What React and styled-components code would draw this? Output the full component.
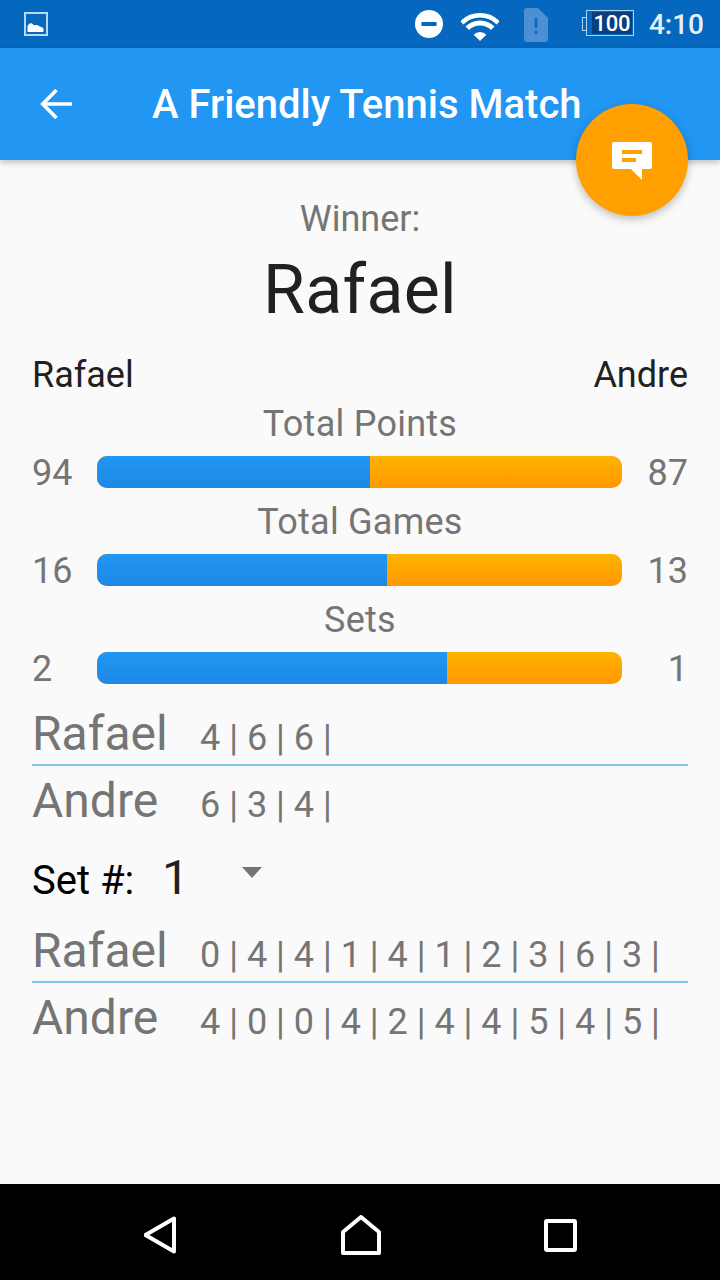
import React from 'react';
import styled, { createGlobalStyle } from 'styled-components';

const Global = createGlobalStyle`
  html, body { margin: 0; padding: 0; background: #fafafa; }
  body { font-family: Roboto, "Liberation Sans", sans-serif; }
  svg { display: block; }
`;

const Page = styled.div`
  position: relative;
  width: 720px;
  height: 1280px;
  display: flex;
  flex-direction: column;
  overflow: hidden;
  background: #fafafa;
`;

const StatusBar = styled.div`
  height: 48px;
  flex: none;
  background: #0568be;
  display: flex;
  align-items: center;
  padding: 0 16px 0 24px;
  color: #fff;
`;
const StatusRight = styled.div`
  margin-left: auto;
  display: flex;
  align-items: center;
`;
const StatusIcon = styled.span`
  display: block;
  margin-left: ${p => p.$left || 0}px;
  margin-top: ${p => p.$down || 0}px;
`;
const Clock = styled.span`
  font-size: 28px;
  font-weight: 500;
  margin-left: 15px;
  color: #e6f0f9;
`;
const Battery = styled.div`
  position: relative;
  width: 48px;
  height: 26px;
  margin: 0 0 2px 38px;
  box-sizing: border-box;
  border: 1px solid #a8d4f4;
  padding: 1px 1px 1px 5px;
  display: flex;
  &::before {
    content: '';
    position: absolute;
    left: -5px;
    top: 6px;
    width: 4px;
    height: 12px;
    border: 1px solid #a8d4f4;
    border-right: none;
  }
`;
const BatteryFill = styled.div`
  flex: 1;
  background: #0a3f7c;
  display: flex;
  align-items: center;
  justify-content: center;
  font-size: 22px;
  font-weight: 500;
  letter-spacing: -0.3px;
`;

const Toolbar = styled.div`
  position: relative;
  z-index: 1;
  height: 112px;
  flex: none;
  background: #2196f3;
  box-shadow: 0 3px 6px rgba(0, 0, 0, 0.22);
  display: flex;
  align-items: center;
  padding-left: 40px;
  box-sizing: border-box;
  color: #fff;
`;
const Title = styled.div`
  font-size: 40px;
  font-weight: 500;
  margin-left: 80px;
  white-space: nowrap;
`;
const Fab = styled.div`
  position: absolute;
  left: 576px;
  top: 56px;
  width: 112px;
  height: 112px;
  padding-top: 2px;
  box-sizing: border-box;
  border-radius: 50%;
  background: #ffa000;
  box-shadow: 0 3px 8px rgba(0, 0, 0, 0.25);
  display: flex;
  align-items: center;
  justify-content: center;
`;

const Content = styled.main`
  flex: 1;
  padding: 0 32px;
  display: flex;
  flex-direction: column;
`;
const WinnerLabel = styled.div`
  margin-top: 38px;
  text-align: center;
  font-size: 36px;
  line-height: 42px;
  color: #757575;
`;
const WinnerName = styled.div`
  text-align: center;
  font-size: 68px;
  line-height: 80px;
  letter-spacing: 0.3px;
  margin-top: 10px;
  color: #212121;
`;
const Players = styled.div`
  display: flex;
  justify-content: space-between;
  font-size: 36px;
  line-height: 42px;
  margin-top: 24px;
  color: #212121;
`;
const StatLabel = styled.div`
  text-align: center;
  font-size: 36px;
  line-height: 42px;
  letter-spacing: 0.25px;
  margin-top: ${p => p.$top}px;
  color: #757575;
`;
const StatRow = styled.div`
  display: flex;
  align-items: center;
  height: 42px;
  margin-top: 6px;
  font-size: 36px;
  color: #757575;
`;
const StatLeft = styled.span`
  width: 65px;
  padding-top: 2px;
`;
const StatRight = styled.span`
  width: 66px;
  padding-top: 2px;
  text-align: right;
`;
const Bar = styled.div`
  width: 525px;
  height: 32px;
  border-radius: 10px;
  overflow: hidden;
  background: linear-gradient(#ffb300, #ff9800);
`;
const BarFill = styled.div`
  height: 100%;
  background: linear-gradient(#2196f3, #1e88e5);
`;
const ScoreRow = styled.div`
  display: flex;
  align-items: baseline;
  height: ${p => p.$h}px;
  box-sizing: border-box;
  padding-top: ${p => p.$pad || 0}px;
  border-bottom: ${p => (p.$line ? '2px solid #81c6f3' : 'none')};
  white-space: nowrap;
  color: #757575;
  margin-top: ${p => p.$top || 0}px;
`;
const ScoreName = styled.span`
  width: 168px;
  font-size: 48px;
  line-height: 56px;
`;
const ScoreValues = styled.span`
  font-size: 36px;
  line-height: 56px;
`;
const SetRow = styled.div`
  display: flex;
  align-items: baseline;
  margin-top: 15px;
  height: 74px;
`;
const SetLabel = styled.span`
  font-size: 40px;
  color: #000;
  width: 130px;
`;
const SetValue = styled.span`
  font-size: 48px;
  color: #212121;
  width: 80px;
`;
const Caret = styled.span`
  width: 0;
  height: 0;
  border-left: 10px solid transparent;
  border-right: 10px solid transparent;
  border-top: 11px solid #757575;
  align-self: flex-start;
  margin-top: 18px;
`;

const NavBar = styled.nav`
  height: 96px;
  flex: none;
  box-sizing: border-box;
  padding-top: 6px;
  background: #000;
  display: flex;
  align-items: center;
  justify-content: center;
  gap: 163px;
`;

const Gallery = () => (
  <svg width="24" height="24" viewBox="0 0 24 24">
    <rect x="1" y="1" width="22" height="22" fill="none" stroke="#b8d8f2" strokeWidth="2" />
    <path d="M3.500 20v-6c1-2 3-3.500 4.500-2.500 1 .8 2 2 3 1.800 1.500-.5 3-.5 4 .7.800 1 2 .8 3 1.200.800.400 1.500 1 1.500 2V20z" fill="#fff" />
  </svg>
);
const Dnd = () => (
  <svg width="28" height="28" viewBox="0 0 28 28">
    <circle cx="14" cy="14" r="14" fill="#fff" />
    <rect x="6.500" y="12" width="15" height="4" fill="#0568be" />
  </svg>
);
const Wifi = () => (
  <svg width="38" height="28" viewBox="0 0 38 28">
    <path d="M0.800 9.800A25.750 25.750 0 0 1 37.200 9.800" fill="none" stroke="#fff" strokeWidth="4.500" />
    <path d="M6.270 15.270A18 18 0 0 1 31.730 15.270" fill="none" stroke="#fff" strokeWidth="5" />
    <path d="M19 28L12.640 21.640A9 9 0 0 1 25.360 21.640z" fill="#fff" />
  </svg>
);
const Sim = () => (
  <svg width="24" height="34" viewBox="0 0 24 34">
    <path d="M3 0h11l10 10v21a3 3 0 0 1-3 3H3a3 3 0 0 1-3-3V3a3 3 0 0 1 3-3z" fill="#4c8fd2" />
    <rect x="10.500" y="10" width="3" height="10" fill="#0f6cc0" />
    <rect x="10.500" y="23" width="3" height="3" fill="#0f6cc0" />
  </svg>
);
const BackArrow = () => (
  <svg width="32" height="32" viewBox="0 0 32 32">
    <path d="M32 16H3M16.500 2L2.700 16l13.800 14" fill="none" stroke="#fff" strokeWidth="3.600" />
  </svg>
);
const Chat = () => (
  <svg width="40" height="38" viewBox="0 0 40 38">
    <path d="M2 0h36a2 2 0 0 1 2 2v23a2 2 0 0 1-2 2h-8v11L19 27H2a2 2 0 0 1-2-2V2a2 2 0 0 1 2-2z" fill="#fff" />
    <rect x="10" y="8" width="20" height="4" fill="#ffa000" />
    <rect x="10" y="16" width="14" height="4" fill="#ffa000" />
  </svg>
);
const NavBack = () => (
  <svg width="34" height="38" viewBox="0 0 34 38">
    <path d="M30 2.500v33L1.500 19z" fill="none" stroke="#fff" strokeWidth="4" strokeLinejoin="round" />
  </svg>
);
const NavHome = () => (
  <svg width="40" height="40" viewBox="0 0 40 40">
    <path d="M2 38V17L20 2l18 15v21z" fill="none" stroke="#fff" strokeWidth="4" strokeLinejoin="round" />
  </svg>
);
const NavSquare = () => (
  <svg width="33" height="33" viewBox="0 0 33 33">
    <rect x="2" y="2" width="29" height="29" rx="1" fill="none" stroke="#fff" strokeWidth="4" />
  </svg>
);

const stats = [
  { label: 'Total Points', a: 94, b: 87, pct: 52, top: 7 },
  { label: 'Total Games', a: 16, b: 13, pct: 55.2, top: 8 },
  { label: 'Sets', a: 2, b: 1, pct: 66.7, top: 8 },
];

export default function App() {
  return (
    <Page>
      <Global />
      <StatusBar>
        <Gallery />
        <StatusRight>
          <Dnd />
          <StatusIcon $left={18} $down={6}><Wifi /></StatusIcon>
          <StatusIcon $left={25} $down={2}><Sim /></StatusIcon>
          <Battery><BatteryFill>100</BatteryFill></Battery>
          <Clock>4:10</Clock>
        </StatusRight>
      </StatusBar>
      <Toolbar>
        <BackArrow />
        <Title>A Friendly Tennis Match</Title>
        <Fab><Chat /></Fab>
      </Toolbar>
      <Content>
        <WinnerLabel>Winner:</WinnerLabel>
        <WinnerName>Rafael</WinnerName>
        <Players><span>Rafael</span><span>Andre</span></Players>
        {stats.map(s => (
          <React.Fragment key={s.label}>
            <StatLabel $top={s.top}>{s.label}</StatLabel>
            <StatRow>
              <StatLeft>{s.a}</StatLeft>
              <Bar><BarFill style={{ width: `${s.pct}%` }} /></Bar>
              <StatRight>{s.b}</StatRight>
            </StatRow>
          </React.Fragment>
        ))}
        <ScoreRow $h={60} $line $top={17}>
          <ScoreName>Rafael</ScoreName><ScoreValues>4 | 6 | 6 |</ScoreValues>
        </ScoreRow>
        <ScoreRow $h={68} $pad={7}>
          <ScoreName>Andre</ScoreName><ScoreValues>6 | 3 | 4 |</ScoreValues>
        </ScoreRow>
        <SetRow>
          <SetLabel>Set #:</SetLabel>
          <SetValue>1</SetValue>
          <Caret />
        </SetRow>
        <ScoreRow $h={60} $line>
          <ScoreName>Rafael</ScoreName><ScoreValues>0 | 4 | 4 | 1 | 4 | 1 | 2 | 3 | 6 | 3 |</ScoreValues>
        </ScoreRow>
        <ScoreRow $h={68} $pad={7}>
          <ScoreName>Andre</ScoreName><ScoreValues>4 | 0 | 0 | 4 | 2 | 4 | 4 | 5 | 4 | 5 |</ScoreValues>
        </ScoreRow>
      </Content>
      <NavBar>
        <NavBack />
        <NavHome />
        <NavSquare />
      </NavBar>
    </Page>
  );
}
